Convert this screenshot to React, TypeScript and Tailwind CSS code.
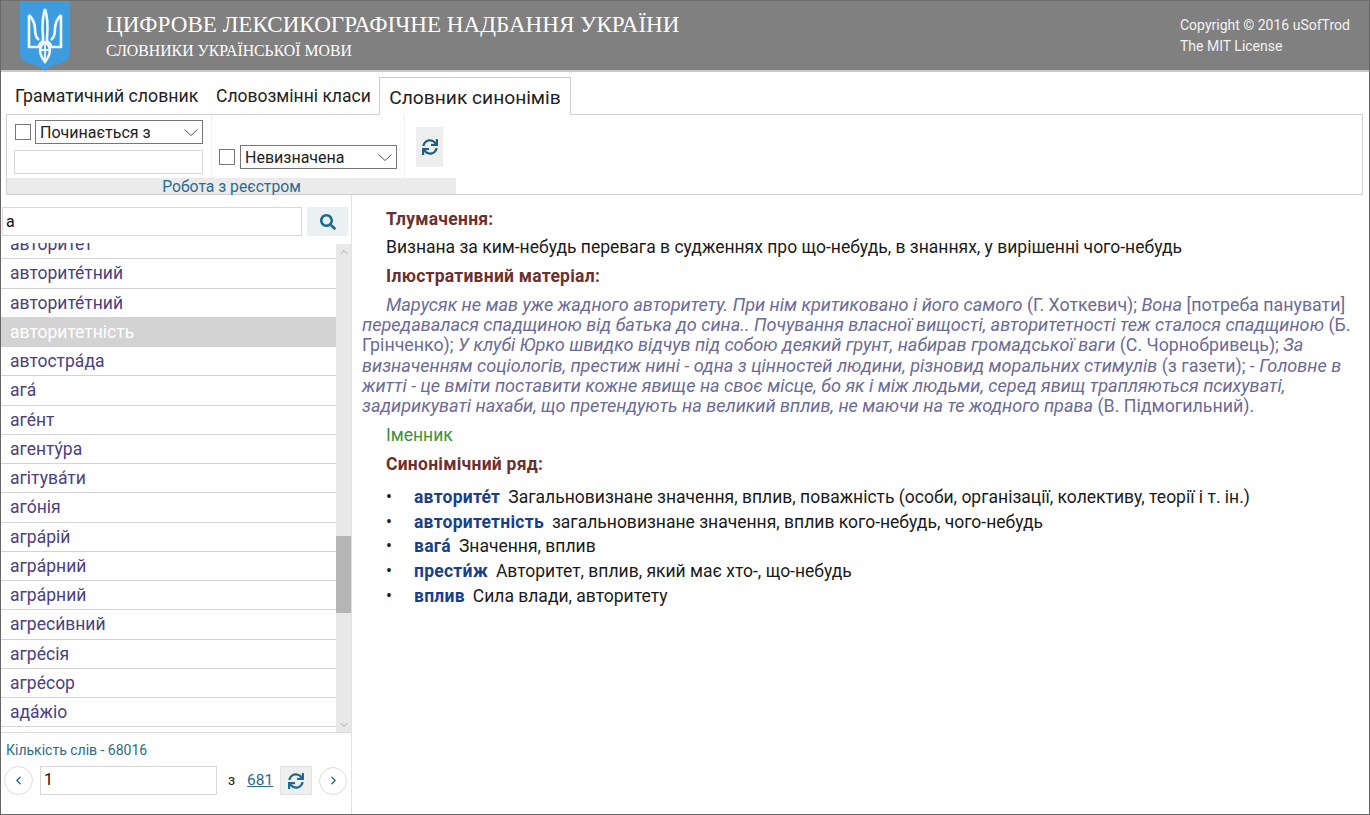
import { FaSync, FaSearch } from "react-icons/fa";
import { ChevronDown, ChevronLeft, ChevronRight, ChevronUp } from "lucide-react";

const rows = ["авторите́т","авторите́тний","авторите́тний","авторитетність","автостра́да","ага́","аге́нт","агенту́ра","агітува́ти","аго́нія","агра́рій","агра́рний","агра́рний","агреси́вний","агре́сія","агре́сор","ада́жіо"];

function Trident() {
  return (
    <svg width="50" height="71" viewBox="0 0 50 71" className="block">
      <path d="M0 0H50V52C50 60 42 62 35 64C31 65 27 67 25 70C23 67 19 65 15 64C8 62 0 60 0 52Z" fill="#3d9be0" />
      <g fill="none" stroke="#f0f7fc" strokeWidth="2.6">
        <path d="M25 8C23 14 21.5 20 23 36C23.4 40 22 43 20 45M25 8C27 14 28.5 20 27 36C26.6 40 28 43 30 45" />
        <path d="M9 14V38C9 41 9 43 9 46H19C19 43 21 41 23 41M9 14C13 18 15 22 15 28C15 33 16 37 19 39" />
        <path d="M41 14V38C41 41 41 43 41 46H31C31 43 29 41 27 41M41 14C37 18 35 22 35 28C35 33 34 37 31 39" />
        <path d="M25 41C19 45 18 52 25 61C32 52 31 45 25 41Z" />
        <path d="M25 41V61M19 49H31" strokeWidth="1.8" />
      </g>
    </svg>
  );
}

function Check() {
  return <span className="block w-[16px] h-[16px] border border-[#767676] bg-white shrink-0" />;
}

function Select({ label, w }: { label: string; w: string }) {
  return (
    <div className={`h-[24px] ${w} border border-[#767676] bg-white flex items-center justify-between pl-[4px] pr-[4px] text-[16px] leading-[24px] text-[#222]`}>
      <span className="pt-[1px]">{label}</span>
      <svg width="14" height="7" viewBox="0 0 14 7" fill="none" stroke="#555" strokeWidth="1"><path d="M0.5 0.5L7 6.5L13.5 0.5" /></svg>
    </div>
  );
}

export default function App() {
  return (
    <div className="w-[1370px] h-[815px] overflow-hidden bg-white flex flex-col border-x border-b border-[#666] font-['Roboto',sans-serif]">
      <header className="h-[72px] shrink-0 bg-[#808080] border-t border-[#6f6f6f] border-b-2 border-b-[#c8c8c8] flex text-white">
        <div className="ml-[19px] shrink-0"><Trident /></div>
        <div className="ml-[36px] pt-[10px] flex-1 font-['Liberation_Serif',serif]">
          <div className="text-[23.1px] leading-[26px] whitespace-nowrap">ЦИФРОВЕ ЛЕКСИКОГРАФІЧНЕ НАДБАННЯ УКРАЇНИ</div>
          <div className="text-[15.8px] leading-[20px] mt-[4px] whitespace-nowrap">СЛОВНИКИ УКРАЇНСЬКОЇ МОВИ</div>
        </div>
        <div className="w-[189px] pt-[14px] text-[14px] leading-[21px] text-[#f2f2f2]">
          <div>Copyright © 2016 uSofTrod</div>
          <div>The MIT License</div>
        </div>
      </header>

      <nav className="h-[42px] shrink-0 flex items-end pl-[5px]">
        <div className="pl-[9px] w-[201px] h-[37px] leading-[38px] text-[17.7px] text-[#222] whitespace-nowrap">Граматичний словник</div>
        <div className="pl-[9px] w-[172px] h-[37px] leading-[38px] text-[17.5px] text-[#222] whitespace-nowrap">Словозмінні класи</div>
        <div className="w-[192px] h-[38px] -mb-px z-10 bg-white border border-[#ccc] border-b-white text-center leading-[39px] text-[19.2px] text-[#222] whitespace-nowrap">Словник синонімів</div>
      </nav>

      <section className="ml-[5px] mr-[6px] h-[81px] shrink-0 border border-[#d0d0d0]">
        <div className="w-[449px] h-full flex flex-col">
          <div className="flex-1 flex">
            <div className="w-[205px] pl-[7px] pt-[5px] flex flex-col gap-[6px] border-r border-dotted border-[#e4e4e4]">
              <div className="flex items-center gap-[4px] pl-[1px]">
                <Check />
                <Select label="Починається з" w="w-[168px]" />
              </div>
              <div className="w-[189px] h-[24px] border border-[#d8d8d8] bg-white" />
            </div>
            <div className="w-[193px] pl-[7px] pt-[30px] border-r border-dotted border-[#e4e4e4]">
              <div className="flex items-center gap-[5px]">
                <Check />
                <Select label="Невизначена" w="w-[157px]" />
              </div>
            </div>
            <div className="pl-[11px] pt-[12px]">
              <div className="w-[27px] h-[40px] bg-[#eeeeee] flex items-center justify-center text-[#20607f]"><FaSync size={16} /></div>
            </div>
          </div>
          <div className="h-[16px] bg-[#ebebeb] text-center text-[15.7px] leading-[17px] text-[#2a6a90] whitespace-nowrap">Робота з реєстром</div>
        </div>
      </section>

      <main className="flex-1 flex min-h-0">
        <aside className="w-[351px] shrink-0 border-r border-[#e2e2e2] flex flex-col">
          <div className="h-[48px] shrink-0 flex pt-[12px] pl-[1px]">
            <div className="w-[300px] h-[29px] border border-[#d8d8d8] pl-[3px] text-[16px] leading-[28px] text-[#111]">а</div>
            <div className="ml-[5px] w-[41px] h-[29px] bg-[#ebf0f2] flex items-center justify-center text-[#1c6a8c]"><FaSearch size={16} /></div>
          </div>
          <div className="h-[490px] shrink-0 flex overflow-hidden border-b border-[#dcdcdc]">
            <div className="flex-1 min-w-0 overflow-hidden">
              <div className="-mt-[13px]">
                {rows.map((r, i) => (
                  <div key={i} className={`h-[29.25px] pl-[9px] border-b border-[#d4d4d4] text-[17.5px] leading-[28px] ${i === 3 ? "bg-[#d3d3d3] text-white" : "text-[#4a4082]"}`}>{r}</div>
                ))}
              </div>
            </div>
            <div className="w-[15px] shrink-0 mt-[1px] bg-[#e8e8e8] flex flex-col text-[#aaa]">
              <div className="h-[292px] shrink-0 flex justify-center"><ChevronUp size={12} className="mt-[2px]" /></div>
              <div className="h-[77px] shrink-0 bg-[#b5b5b5]" />
              <div className="flex-1 flex justify-center items-end"><ChevronDown size={12} className="mb-[1px]" /></div>
            </div>
          </div>
          <div className="pl-[5px] pt-[9px] text-[14px] leading-[16px] text-[#2d6a88] whitespace-nowrap">Кількість слів - 68016</div>
          <div className="flex items-center pl-[3px] mt-[8px] text-[#222]">
            <div className="w-[29px] h-[29px] rounded-full border border-[#dcdcdc] flex items-center justify-center text-[#1c6a8c]"><ChevronLeft size={13} strokeWidth={2.5} /></div>
            <div className="ml-[7px] w-[177px] h-[29px] border border-[#d8d8d8] pl-[3px] text-[16px] leading-[26px] text-[#111]">1</div>
            <span className="ml-[11px] text-[14px]">з</span>
            <span className="ml-[12px] text-[15.5px] underline text-[#2a6a90]">681</span>
            <div className="ml-[7px] w-[32px] h-[29px] bg-[#eeeeee] border border-[#e0e0e0] flex items-center justify-center text-[#1c6a8c]"><FaSync size={16} /></div>
            <div className="ml-[7px] w-[28px] h-[28px] rounded-full border border-[#dcdcdc] flex items-center justify-center text-[#1c6a8c]"><ChevronRight size={13} strokeWidth={2.5} /></div>
          </div>
        </aside>

        <article className="flex-1 pl-[10px] pr-[18px] pt-[15px] text-[17.5px] leading-[19px] text-[#1a1a1a]">
          <div className="pl-[24px] font-bold tracking-[0.25px] text-[#6b3030] h-[28px]">Тлумачення:</div>
          <div className="pl-[24px] h-[29px]">Визнана за ким-небудь перевага в судженнях про що-небудь, в знаннях, у вирішенні чого-небудь</div>
          <div className="pl-[24px] font-bold tracking-[0.25px] text-[#6b3030] h-[28px]">Ілюстративний матеріал:</div>
          <p className="indent-[24px] text-[#6b6b98] text-[17.8px] h-[121px] leading-[20.2px] w-[992px]">
            <i className="text-[18.1px]">Марусяк не мав уже жадного авторитету. При нім критиковано і його самого </i>(Г. Хоткевич); <i className="text-[18.1px]">Вона </i>[потреба панувати] <i className="text-[18.1px]">передавалася спадщиною від батька до сина.. Почування власної вищості, авторитетності теж сталося спадщиною </i>(Б. Грінченко); <i className="text-[18.1px]">У клубі Юрко швидко відчув під собою деякий грунт, набирав громадської ваги </i>(С. Чорнобривець); <i className="text-[18.1px]">За визначенням соціологів, престиж нині - одна з цінностей людини, різновид моральних стимулів </i>(з газети); - <i className="text-[18.1px]">Головне в житті - це вміти поставити кожне явище на своє місце, бо як і між людьми, серед явищ трапляються психуваті, задирикуваті нахаби, що претендують на великий вплив, не маючи на те жодного права </i>(В. Підмогильний).
          </p>
          <div className="pl-[24px] text-[#3d8f3d] h-[29px] mt-[10px]">Іменник</div>
          <div className="pl-[24px] font-bold tracking-[0.25px] text-[#6b3030] h-[33px]">Синонімічний ряд:</div>
          <ul>
            {[
              ["авторите́т", "Загальновизнане значення, вплив, поважність (особи, організації, колективу, теорії і т. ін.)"],
              ["авторитетність", "загальновизнане значення, вплив кого-небудь, чого-небудь"],
              ["вага́", "Значення, вплив"],
              ["прести́ж", "Авторитет, вплив, який має хто-, що-небудь"],
              ["вплив", "Сила влади, авторитету"],
            ].map(([a, b]) => (
              <li key={a} className="flex h-[24.7px]">
                <span className="w-[52px] pl-[24px]">•</span>
                <span><b className="text-[#173f8a] tracking-[0.25px]">{a}</b><span className="ml-[8px]">{b}</span></span>
              </li>
            ))}
          </ul>
        </article>
      </main>
    </div>
  );
}
